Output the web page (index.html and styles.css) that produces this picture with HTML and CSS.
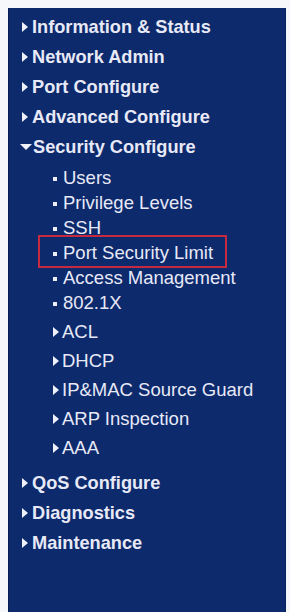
FILE: index.html
```html
<!DOCTYPE html>
<html>
<head>
<meta charset="utf-8">
<link rel="stylesheet" href="styles.css">
</head>
<body>
<nav class="menu">
  <ul class="top">
    <li class="top-item"><span class="arrow-r"></span>Information &amp; Status</li>
    <li class="top-item"><span class="arrow-r"></span>Network Admin</li>
    <li class="top-item"><span class="arrow-r"></span>Port Configure</li>
    <li class="top-item"><span class="arrow-r"></span>Advanced Configure</li>
    <li class="top-item open"><span class="arrow-d"></span>Security Configure</li>
    <li class="sub">
      <ul class="sub-list">
        <li class="leaf"><span class="dot"></span>Users</li>
        <li class="leaf"><span class="dot"></span>Privilege Levels</li>
        <li class="leaf"><span class="dot"></span>SSH</li>
        <li class="leaf selected"><span class="dot"></span>Port Security Limit</li>
        <li class="leaf"><span class="dot"></span>Access Management</li>
        <li class="leaf"><span class="dot"></span>802.1X</li>
        <li class="branch first-branch"><span class="arrow-r"></span>ACL</li>
        <li class="branch"><span class="arrow-r"></span>DHCP</li>
        <li class="branch"><span class="arrow-r"></span>IP&amp;MAC Source Guard</li>
        <li class="branch"><span class="arrow-r"></span>ARP Inspection</li>
        <li class="branch"><span class="arrow-r"></span>AAA</li>
      </ul>
    </li>
    <li class="top-item"><span class="arrow-r"></span>QoS Configure</li>
    <li class="top-item"><span class="arrow-r"></span>Diagnostics</li>
    <li class="top-item"><span class="arrow-r"></span>Maintenance</li>
  </ul>
</nav>
</body>
</html>
```

FILE: styles.css
```css
html, body {
  margin: 0;
  padding: 0;
  background: #f5f7fb;
}
body {
  padding: 8px 4px 0 8px;
  font-family: "Liberation Sans", Arial, sans-serif;
}
.menu {
  background: #0c2a6c;
  min-height: 604px;
  box-sizing: border-box;
  border-left: 1px solid #081d52;
  border-right: 1px solid #0a2360;
  padding-top: 4px;
  color: #e8e9f7;
}
ul {
  list-style: none;
  margin: 0;
  padding: 0;
}
.top-item {
  height: 30px;
  display: flex;
  align-items: center;
  padding-left: 13px;
  font-weight: bold;
  font-size: 18.2px;
  white-space: nowrap;
}
.arrow-r {
  width: 0;
  height: 0;
  border-top: 5px solid transparent;
  border-bottom: 5px solid transparent;
  border-left: 6px solid #eef0fa;
  margin-right: 4px;
  flex: none;
}
.arrow-d {
  width: 0;
  height: 0;
  border-left: 6px solid transparent;
  border-right: 6px solid transparent;
  border-top: 6px solid #eef0fa;
  margin-right: 1px;
  margin-left: -2px;
  flex: none;
}
.sub-list {
  padding-top: 3px;
  padding-bottom: 6px;
}
.leaf, .branch {
  display: flex;
  align-items: center;
  padding-left: 44px;
  font-size: 18.5px;
  white-space: nowrap;
  position: relative;
}
.leaf {
  height: 25px;
}
.branch {
  height: 29px;
}
.first-branch {
  margin-top: 2px;
}
.dot {
  width: 4px;
  height: 4px;
  background: #eceef9;
  margin-right: 6px;
  margin-top: 3px;
  flex: none;
}
.branch .arrow-r {
  margin-right: 3px;
}
.selected::before {
  content: "";
  position: absolute;
  left: 29px;
  top: -5px;
  width: 189px;
  height: 33px;
  box-sizing: border-box;
  border: 2px solid #c52a40;
}
```
